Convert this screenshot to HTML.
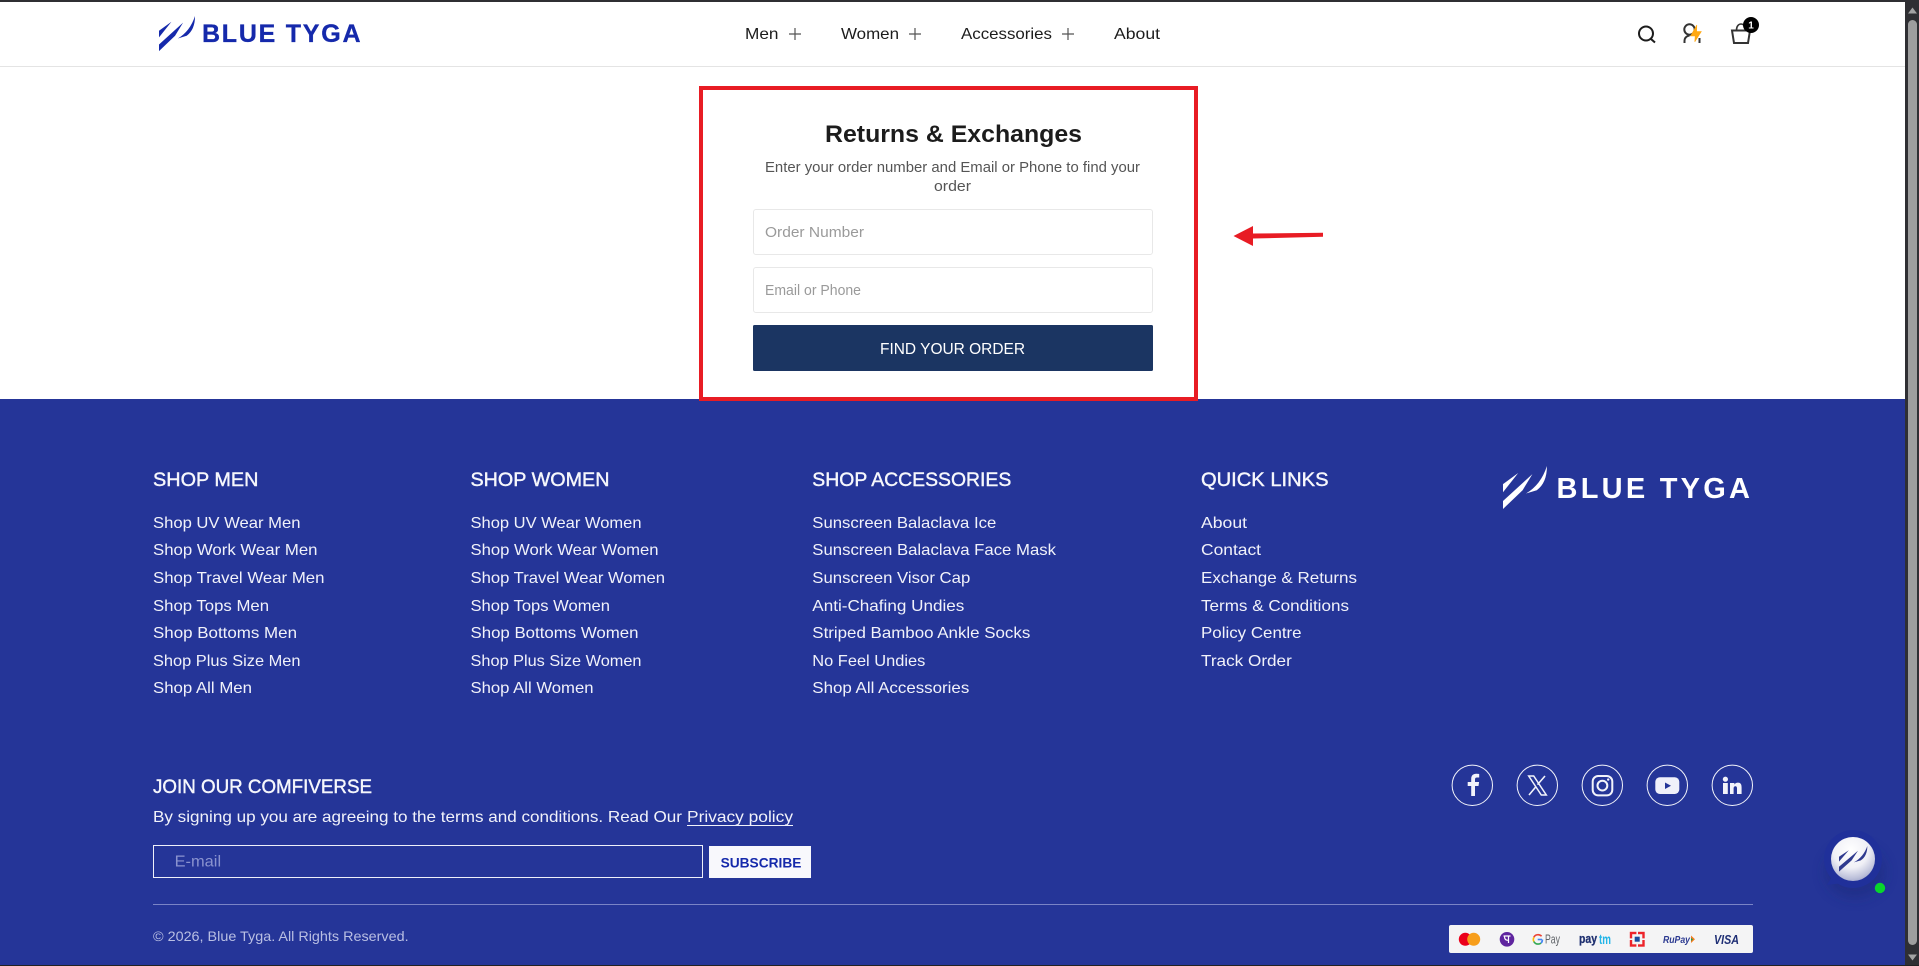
<!DOCTYPE html>
<html lang="en">
<head>
<meta charset="utf-8">
<title>Returns &amp; Exchanges - Blue Tyga</title>
<style>
html,body{margin:0;padding:0;width:1919px;height:966px;overflow:hidden;background:#fff}
svg{display:block;position:absolute;left:0;top:0}
text{font-family:"Liberation Sans",sans-serif;white-space:pre}
.nav{font-size:16px;fill:#1c1c1c}
.h{font-size:19px;fill:#f6f7fc;stroke:#f6f7fc;stroke-width:.4}
.l{font-size:16px;fill:#f1f2fa}
.ph{font-size:14.5px;fill:#9a9a9a}
</style>
</head>
<body>
<svg width="1919" height="966" viewBox="0 0 1919 966" xmlns="http://www.w3.org/2000/svg">
<defs>
<radialGradient id="sph" cx=".45" cy=".3" r=".8">
<stop offset="0" stop-color="#ffffff"/><stop offset=".5" stop-color="#f0f0f6"/><stop offset=".8" stop-color="#bcc0da"/><stop offset="1" stop-color="#8f95c0"/>
</radialGradient>
<filter id="bl" x="-50%" y="-50%" width="200%" height="200%"><feGaussianBlur stdDeviation="6"/></filter>
<g id="mark">
<path d="M0 54L45 21L0 78Z"/>
<path d="M0 104L87 24L58 72L0 128Z"/>
<path d="M68 82Q112 56 130 0Q130 50 100 72Z"/>
</g>
</defs>

<!-- top -->
<rect width="1919" height="966" fill="#fff"/>
<rect width="1919" height="2" fill="#2f2f33"/>
<rect y="66" width="1905" height="1" fill="#e4e4e4"/>

<!-- header logo -->
<use href="#mark" transform="translate(159 16) scale(.277 .274)" fill="#1529ab"/>
<text x="202" y="42" font-size="25" font-weight="700" fill="#1529ab" stroke="#1529ab" stroke-width=".3" textLength="158.5">BLUE TYGA</text>

<!-- nav -->
<text class="nav" x="745" y="39" textLength="33.5" lengthAdjust="spacingAndGlyphs">Men</text>
<path d="M789 34h12M795 28v12" stroke="#555" stroke-width="1.2" fill="none"/>
<text class="nav" x="841" y="39" textLength="58" lengthAdjust="spacingAndGlyphs">Women</text>
<path d="M909 34h12M915 28v12" stroke="#555" stroke-width="1.2" fill="none"/>
<text class="nav" x="961" y="39" textLength="91" lengthAdjust="spacingAndGlyphs">Accessories</text>
<path d="M1062 34h12M1068 28v12" stroke="#555" stroke-width="1.2" fill="none"/>
<text class="nav" x="1114" y="39" textLength="46" lengthAdjust="spacingAndGlyphs">About</text>

<!-- header icons -->
<circle cx="1646" cy="33.5" r="7" fill="none" stroke="#1c1c1c" stroke-width="2"/>
<path d="M1651 39l4 3.5" stroke="#1c1c1c" stroke-width="2" fill="none"/>
<circle cx="1689.5" cy="29.5" r="5.2" fill="none" stroke="#333" stroke-width="2"/>
<path d="M1684.5 43v-2c0-3 2-5 5-5.5M1699.5 38v5" fill="none" stroke="#333" stroke-width="2"/>
<path d="M1696.8 25L1690.7 36H1695.2L1694.8 41.8L1701.3 31.5H1696.6Z" fill="#ffa812" stroke="#ffa812" stroke-width=".6"/>
<path d="M1732 30.5h18l-2 12.5h-14z" fill="none" stroke="#333" stroke-width="2"/>
<path d="M1736.5 30c0-8 9-8 9 0" fill="none" stroke="#333" stroke-width="1.6"/>
<circle cx="1751" cy="25" r="8" fill="#000"/>
<text x="1751" y="28.5" font-size="10" font-weight="700" fill="#fff" text-anchor="middle">1</text>

<!-- form -->
<text x="825" y="142" font-size="24" font-weight="700" fill="#1c1c1c" textLength="257" lengthAdjust="spacingAndGlyphs">Returns &amp; Exchanges</text>
<text x="765" y="172" font-size="14.5" fill="#555" textLength="375" lengthAdjust="spacingAndGlyphs">Enter your order number and Email or Phone to find your</text>
<text x="934" y="191" font-size="14.5" fill="#555" textLength="37" lengthAdjust="spacingAndGlyphs">order</text>
<rect x="753.5" y="209.5" width="399" height="45" rx="2.5" fill="#fff" stroke="#e8e8e8"/>
<text class="ph" x="765" y="237" textLength="99" lengthAdjust="spacingAndGlyphs">Order Number</text>
<rect x="753.5" y="267.5" width="399" height="45" rx="2.5" fill="#fff" stroke="#e8e8e8"/>
<text class="ph" x="765" y="295" textLength="96" lengthAdjust="spacingAndGlyphs">Email or Phone</text>
<rect x="753" y="325" width="400" height="46" rx="1.5" fill="#1b3562"/>
<text x="880" y="354" font-size="16" fill="#fff" textLength="145" lengthAdjust="spacingAndGlyphs">FIND YOUR ORDER</text>

<!-- footer -->
<rect y="399" width="1905" height="566" fill="#253598"/>

<!-- red annotation -->
<rect x="701" y="88" width="495" height="311" fill="none" stroke="#e81c24" stroke-width="4"/>
<path d="M1233.5 236L1253 226V233.5L1323 232.8V236.8L1253 238.5V246Z" fill="#e81c24"/>

<!-- column headings -->
<text class="h" x="153" y="486" textLength="105.5" lengthAdjust="spacingAndGlyphs">SHOP MEN</text>
<text class="h" x="470.5" y="486" textLength="139" lengthAdjust="spacingAndGlyphs">SHOP WOMEN</text>
<text class="h" x="812.3" y="486" textLength="199" lengthAdjust="spacingAndGlyphs">SHOP ACCESSORIES</text>
<text class="h" x="1201" y="486" textLength="127.5" lengthAdjust="spacingAndGlyphs">QUICK LINKS</text>

<!-- col 1 -->
<text class="l" x="153" y="528" textLength="147.5" lengthAdjust="spacingAndGlyphs">Shop UV Wear Men</text>
<text class="l" x="153" y="555" textLength="164.5" lengthAdjust="spacingAndGlyphs">Shop Work Wear Men</text>
<text class="l" x="153" y="583" textLength="171.5" lengthAdjust="spacingAndGlyphs">Shop Travel Wear Men</text>
<text class="l" x="153" y="611" textLength="116" lengthAdjust="spacingAndGlyphs">Shop Tops Men</text>
<text class="l" x="153" y="638" textLength="144" lengthAdjust="spacingAndGlyphs">Shop Bottoms Men</text>
<text class="l" x="153" y="666" textLength="147.5" lengthAdjust="spacingAndGlyphs">Shop Plus Size Men</text>
<text class="l" x="153" y="693" textLength="99" lengthAdjust="spacingAndGlyphs">Shop All Men</text>
<!-- col 2 -->
<text class="l" x="470.5" y="528" textLength="171" lengthAdjust="spacingAndGlyphs">Shop UV Wear Women</text>
<text class="l" x="470.5" y="555" textLength="188" lengthAdjust="spacingAndGlyphs">Shop Work Wear Women</text>
<text class="l" x="470.5" y="583" textLength="194.5" lengthAdjust="spacingAndGlyphs">Shop Travel Wear Women</text>
<text class="l" x="470.5" y="611" textLength="139.5" lengthAdjust="spacingAndGlyphs">Shop Tops Women</text>
<text class="l" x="470.5" y="638" textLength="168" lengthAdjust="spacingAndGlyphs">Shop Bottoms Women</text>
<text class="l" x="470.5" y="666" textLength="171" lengthAdjust="spacingAndGlyphs">Shop Plus Size Women</text>
<text class="l" x="470.5" y="693" textLength="123" lengthAdjust="spacingAndGlyphs">Shop All Women</text>
<!-- col 3 -->
<text class="l" x="812.3" y="528" textLength="184" lengthAdjust="spacingAndGlyphs">Sunscreen Balaclava Ice</text>
<text class="l" x="812.3" y="555" textLength="243.7" lengthAdjust="spacingAndGlyphs">Sunscreen Balaclava Face Mask</text>
<text class="l" x="812.3" y="583" textLength="158" lengthAdjust="spacingAndGlyphs">Sunscreen Visor Cap</text>
<text class="l" x="812.3" y="611" textLength="152" lengthAdjust="spacingAndGlyphs">Anti-Chafing Undies</text>
<text class="l" x="812.3" y="638" textLength="218" lengthAdjust="spacingAndGlyphs">Striped Bamboo Ankle Socks</text>
<text class="l" x="812.3" y="666" textLength="113" lengthAdjust="spacingAndGlyphs">No Feel Undies</text>
<text class="l" x="812.3" y="693" textLength="157" lengthAdjust="spacingAndGlyphs">Shop All Accessories</text>
<!-- col 4 -->
<text class="l" x="1201" y="528" textLength="46" lengthAdjust="spacingAndGlyphs">About</text>
<text class="l" x="1201" y="555" textLength="60" lengthAdjust="spacingAndGlyphs">Contact</text>
<text class="l" x="1201" y="583" textLength="156" lengthAdjust="spacingAndGlyphs">Exchange &amp; Returns</text>
<text class="l" x="1201" y="611" textLength="148" lengthAdjust="spacingAndGlyphs">Terms &amp; Conditions</text>
<text class="l" x="1201" y="638" textLength="100.6" lengthAdjust="spacingAndGlyphs">Policy Centre</text>
<text class="l" x="1201" y="666" textLength="90.8" lengthAdjust="spacingAndGlyphs">Track Order</text>

<!-- footer logo -->
<use href="#mark" transform="translate(1503 466) scale(.338 .336)" fill="#fff"/>
<text x="1556.5" y="498" font-size="29" font-weight="700" fill="#fff" textLength="193.5">BLUE TYGA</text>

<!-- social -->
<g fill="none" stroke="#f2f3fa" stroke-width="1">
<circle cx="1472.3" cy="785.3" r="20.2"/>
<circle cx="1537.3" cy="785.3" r="20.2"/>
<circle cx="1602.3" cy="785.3" r="20.2"/>
<circle cx="1667.3" cy="785.3" r="20.2"/>
<circle cx="1732.3" cy="785.3" r="20.2"/>
</g>
<path d="M1475 796v-10h3.5l.6-4h-4.1v-2.5c0-1.2.5-2 2-2h2.2v-3.5c-.6-.1-1.8-.2-3-.2-3 0-5 1.8-5 5v3.2h-3.5v4h3.5v10z" fill="#f2f3fa"/>
<path d="M1528.7 776h5L1546.3 795h-5z" fill="none" stroke="#f2f3fa" stroke-width="1.5"/>
<path d="M1545 776l-7.5 8.6M1536 786.6L1529 795" fill="none" stroke="#f2f3fa" stroke-width="1.6"/>
<rect x="1592.7" y="776" width="19.6" height="19.4" rx="5.5" fill="none" stroke="#f2f3fa" stroke-width="2"/>
<circle cx="1602.4" cy="785.6" r="4.9" fill="none" stroke="#f2f3fa" stroke-width="2"/>
<circle cx="1608.2" cy="779.6" r="1.2" fill="#f2f3fa"/>
<rect x="1655.3" y="777.3" width="24" height="16.7" rx="4.5" fill="#f0f0fa"/>
<path d="M1665 782.5l6 3.2-6 3.3z" fill="#253598"/>
<circle cx="1725.4" cy="779.2" r="2.6" fill="#f2f3fa"/>
<rect x="1723" y="783" width="4.8" height="11" fill="#f2f3fa"/>
<path d="M1730 783h4.4v1.6c.7-1.2 2-2 3.6-2 3 0 3.6 2.2 3.6 5V794h-4.6v-5.2c0-1.3-.1-2.6-1.6-2.6s-1.8 1.2-1.8 2.6V794H1730z" fill="#f2f3fa"/>

<!-- newsletter -->
<text x="153" y="793" font-size="19" fill="#f6f7fc" stroke="#f6f7fc" stroke-width=".4" textLength="219" lengthAdjust="spacingAndGlyphs">JOIN OUR COMFIVERSE</text>
<text class="l" x="153" y="822" textLength="529" lengthAdjust="spacingAndGlyphs">By signing up you are agreeing to the terms and conditions. Read Our</text>
<text class="l" x="687" y="822" textLength="106" lengthAdjust="spacingAndGlyphs">Privacy policy</text>
<rect x="687" y="825" width="106" height="1" fill="#f1f2fa"/>
<rect x="153.5" y="845.5" width="549" height="32" fill="none" stroke="#eef0fa" stroke-width="1"/>
<text x="174.6" y="866.5" font-size="16" fill="#8a93cf" textLength="46.5" lengthAdjust="spacingAndGlyphs">E-mail</text>
<rect x="709" y="846" width="102" height="32" fill="#f8f8fc"/>
<text x="720.6" y="867.5" font-size="14" font-weight="700" fill="#1529ab" textLength="80.8" lengthAdjust="spacingAndGlyphs">SUBSCRIBE</text>

<rect x="153" y="904" width="1600" height="1" fill="#7a84c6"/>
<text x="153" y="941" font-size="14" fill="#b9bfe3" textLength="255.6" lengthAdjust="spacingAndGlyphs">© 2026, Blue Tyga. All Rights Reserved.</text>

<!-- payment strip -->
<rect x="1449" y="925" width="304" height="28" rx="2" fill="#f4f4f5"/>
<circle cx="1465.3" cy="939.3" r="6.5" fill="#eb001b"/>
<circle cx="1473.7" cy="939.3" r="6.5" fill="#f79e1b"/>
<circle cx="1507" cy="939.3" r="7.3" fill="#5f259f"/>
<path d="M1503.5 936h7M1508.5 936v7M1504.5 936.5c0 2.5 1 3.8 3.5 3.8" fill="none" stroke="#fff" stroke-width="1.2"/>
<path d="M1542 939.5h-4.3" stroke="#4285f4" stroke-width="1.6" fill="none"/>
<path d="M1541.6 936.2a4.8 4.8 0 0 0-3.6-1.5" stroke="#ea4335" stroke-width="1.6" fill="none"/>
<path d="M1538 934.7a4.8 4.8 0 0 0-4.2 2.6" stroke="#ea4335" stroke-width="1.6" fill="none"/>
<path d="M1533.8 937.3a5 5 0 0 0 0 4.2" stroke="#fbbc05" stroke-width="1.6" fill="none"/>
<path d="M1533.8 941.5a4.8 4.8 0 0 0 4.2 2.6 4.6 4.6 0 0 0 3-1" stroke="#34a853" stroke-width="1.6" fill="none"/>
<path d="M1541 943.1a4.6 4.6 0 0 0 1.4-3.6" stroke="#4285f4" stroke-width="1.6" fill="none"/>
<text x="1545" y="943.5" font-size="13" fill="#5f6368" textLength="15" lengthAdjust="spacingAndGlyphs">Pay</text>
<text x="1579" y="943" font-size="13" font-weight="700" fill="#1e2f6f" stroke="#1e2f6f" stroke-width=".3" textLength="18" lengthAdjust="spacingAndGlyphs">pay</text>
<text x="1599" y="944" font-size="14" font-weight="700" fill="#22b5e8" textLength="12" lengthAdjust="spacingAndGlyphs">tm</text>
<rect x="1631" y="933" width="12.5" height="12.5" fill="none" stroke="#ed232a" stroke-width="2.4"/>
<path d="M1637.2 931v4M1637.2 943.5v4M1629 939.2h4M1641.5 939.2h4" stroke="#f4f4f5" stroke-width="1.6" fill="none"/>
<rect x="1634.7" y="936.7" width="5" height="5" fill="#1a4a9c"/>
<text x="1663" y="943" font-size="10.5" font-weight="700" font-style="italic" fill="#2b3990" textLength="27" lengthAdjust="spacingAndGlyphs">RuPay</text>
<path d="M1691 935.5l4 3.7-4 3.8z" fill="#f47b20"/>
<path d="M1691 938l2 1.4-2 1.6z" fill="#1a9b4a"/>
<text x="1714" y="944" font-size="12.5" font-weight="700" font-style="italic" fill="#1f2f75" textLength="25" lengthAdjust="spacingAndGlyphs">VISA</text>

<!-- chat bubble -->
<ellipse cx="1855" cy="872" rx="30" ry="26" fill="#1b2a7d" opacity=".55" filter="url(#bl)"/>
<circle cx="1853" cy="859" r="29" fill="#20309a"/>
<path d="M1827 885l6-10 10 8z" fill="#20309a"/>
<circle cx="1853" cy="859" r="22" fill="url(#sph)"/>
<use href="#mark" transform="translate(1839 846) scale(.218 .2)" fill="#2f3a8f"/>
<circle cx="1880" cy="888" r="6" fill="#20309a"/>
<circle cx="1880" cy="888" r="5.2" fill="#09d62c"/>

<!-- scrollbar -->
<rect x="1905" y="0" width="14" height="966" fill="#2f2f33"/>
<path d="M1912.5 7.5l4.5 6h-9z" fill="#a3a3a3"/>
<rect x="1908" y="20" width="9" height="925" rx="4.5" fill="#9e9e9e"/>
<path d="M1912.5 960.5l-4.5-6h9z" fill="#a3a3a3"/>
<rect x="0" y="965" width="1919" height="1" fill="#222"/>
</svg>
</body>
</html>
